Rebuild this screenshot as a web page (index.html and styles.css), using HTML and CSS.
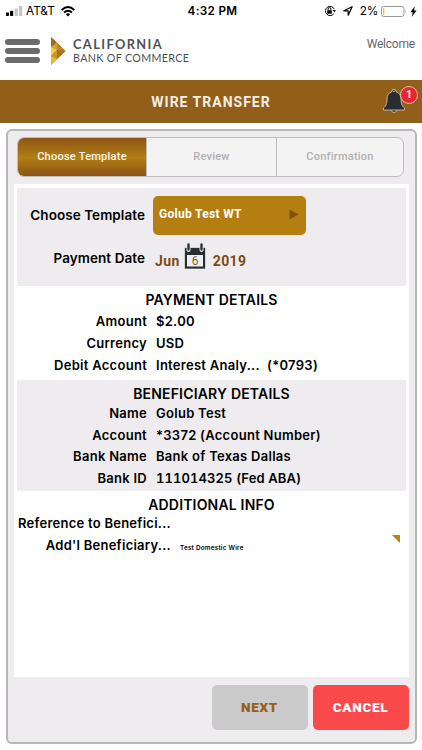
FILE: index.html
```html
<!DOCTYPE html>
<html lang="en">
<head>
<meta charset="utf-8">
<title>Wire Transfer</title>
<link rel="stylesheet" href="styles.css">
</head>
<body>
<div class="status">
  <div class="carrier">
    <svg width="17" height="10" viewBox="0 0 17 10"><rect x="0" y="6.5" width="3" height="3.5" rx=".7"/><rect x="4" y="4.8" width="3.2" height="5.2" rx=".7"/><rect x="8.6" y="2.5" width="3.2" height="7.5" rx=".7" fill="#c4c4c4"/><rect x="13" y="0" width="3.2" height="10" rx=".7" fill="#c4c4c4"/></svg>
    <span class="att">AT&amp;T</span>
    <svg class="wifi" width="14" height="11" viewBox="0 0 14 11"><g fill="none" stroke="#000" stroke-width="1.9"><path d="M.7 4Q7-2 13.3 4"/><path d="M3 6.5Q7 2.8 11 6.5"/></g><path d="M4.8 8.2Q7 6.4 9.2 8.2L7 10.6Z"/></svg>
  </div>
  <div class="time">4:32 PM</div>
  <div class="power">
    <svg width="12" height="12" viewBox="0 0 12 12"><path d="M9.7 8.8A4.6 4.6 0 1 1 10.2 4" fill="none" stroke="#000" stroke-width="1"/><path d="M8.7 5h3.2l-1.5 2.2z"/><rect x="3.2" y="5.2" width="4.6" height="3.6" rx=".5"/><path d="M4.1 5.3V4a1.4 1.4 0 0 1 2.8 0v1.3" fill="none" stroke="#000"/></svg>
    <svg class="loc" width="10" height="10" viewBox="0 0 10 10"><path d="M.8 4.8L9.2.8 5.2 9.2V4.8Z" fill="none" stroke="#000" stroke-width="1.2" stroke-linejoin="round"/></svg>
    <span class="pct">2%</span>
    <svg class="battery" width="26" height="11" viewBox="0 0 26 11"><rect x=".5" y=".5" width="22.5" height="10" rx="2.3" fill="#fff" stroke="#999"/><rect x="2" y="2" width="1.3" height="7" fill="#f5c332"/><path d="M24.3 3.8q1.4 1.6 0 3.4z" fill="#999"/></svg>
    <svg class="bolt" width="7" height="11" viewBox="0 0 7 11"><path d="M4.7.2L.4 6.2h2.4L1.7 10.8 6.6 4.5H4z"/></svg>
  </div>
</div>

<header class="header">
  <div class="menu"><i></i><i></i><i></i></div>
  <svg class="logo" width="15" height="28" viewBox="0 0 15 28"><path d="M0 0L14.5 14 0 28Z" fill="#b9831f"/><path d="M0 0L6 5.8 0 10Z" fill="#a06b20"/><path d="M0 10L6 5.8V13Z" fill="#d9a72e"/><path d="M0 10L6 13 0 19Z" fill="#f0cf43"/><path d="M6 13V22L0 19Z" fill="#c8962a"/><path d="M0 19L6 22 0 28Z" fill="#e4bb38"/><path d="M6 5.8L14.5 14 6 13Z" fill="#b98530"/><path d="M6 13L14.5 14 6 22Z" fill="#a96f23"/></svg>
  <div class="brand"><b>CALIFORNIA</b><span>BANK OF COMMERCE</span></div>
  <span class="welcome">Welcome</span>
</header>

<div class="titlebar">
  <h1>WIRE TRANSFER</h1>
  <div class="alerts">
    <svg width="24" height="26" viewBox="0 0 24 26"><path d="M12 1.2a2 2 0 0 0-2 2v.5C6.7 4.6 5 7.5 5 11c0 5-1.2 7.5-3.5 9v2h21v-2C20.2 18.500 19 16 19 11c0-3.500-1.700-6.400-5-7.300v-.5a2 2 0 0 0-2-2zM9.500 22a2.500 2.500 0 0 0 5 0" fill="#292d30" stroke="#d9cbb8" stroke-width=".8"/><circle cx="12" cy="3.200" r=".8" fill="#d9cbb8"/></svg>
    <span class="badge">1</span>
  </div>
</div>

<main class="panel">
  <nav class="tabs"><span class="active">Choose Template</span><span>Review</span><span>Confirmation</span></nav>
  <div class="sheet">
    <section class="picker">
      <div class="field template"><label>Choose Template</label><div class="select"><span>Golub Test WT</span><svg width="10" height="11" viewBox="0 0 10 11"><path d="M.5.5L9.500 5.500.5 10.500Z" fill="#85500c"/></svg></div></div>
      <div class="field payday"><label>Payment Date</label><div class="date"><span class="month">Jun</span>
        <svg width="24" height="28" viewBox="0 0 24 28"><path d="M1.500 5.500H22.500V27H1.500Z" fill="#292d30" stroke="#fff" stroke-opacity=".6"/><rect x="4" y="13" width="16" height="11.500" fill="#eaf1f5"/><g stroke="#e5e8e9" stroke-width="4" stroke-linecap="round"><path d="M5.500 3V8M18.500 3V8"/></g><g stroke="#292d30" stroke-width="2.300" stroke-linecap="round"><path d="M5.500 2.500V7.500M18.500 2.500V7.500"/></g><text x="12" y="23" text-anchor="middle" class="day">6</text></svg>
        <span class="year">2019</span></div></div>
    </section>
    <section class="details payment">
      <h2>PAYMENT DETAILS</h2>
      <dl><dt>Amount</dt><dd>$2.00</dd><dt>Currency</dt><dd>USD</dd><dt>Debit Account</dt><dd>Interest Analy...&nbsp; (*0793)</dd></dl>
    </section>
    <section class="details beneficiary">
      <h2>BENEFICIARY DETAILS</h2>
      <dl><dt>Name</dt><dd>Golub Test</dd><dt>Account</dt><dd>*3372 (Account Number)</dd><dt>Bank Name</dt><dd>Bank of Texas Dallas</dd><dt>Bank ID</dt><dd class="bank-id">111014325 (Fed ABA)</dd></dl>
    </section>
    <section class="details additional">
      <h2>ADDITIONAL INFO</h2>
      <dl><dt>Reference to Benefici...</dt><dd></dd><dt>Add'l Beneficiary...</dt><dd class="memo"><span>Test Domestic Wire</span><svg width="8" height="8" viewBox="0 0 8 8"><path d="M0 0H8V8Z" fill="#b98218"/></svg></dd></dl>
    </section>
  </div>
  <div class="actions"><button class="next">NEXT</button><button class="cancel">CANCEL</button></div>
</main>
</body>
</html>
```
FILE: styles.css
```css
* { box-sizing: border-box; }
body { margin: 0; width: 422px; height: 750px; overflow: hidden; background: #fff; color: #000; font-family: Inter, "Liberation Sans", sans-serif; }
svg { display: block; flex: none; }
.status { height: 22px; display: grid; grid-template-columns: 1fr auto 1fr; align-items: center; padding: 0 5px 0 6px; }
.carrier, .power { display: flex; align-items: center; }
.att { margin-left: 3px; font-size: 11.8px; width: 29px; white-space: nowrap; }
.wifi { margin-left: 6px; }
.time { font-size: 11.7px; font-weight: 600; letter-spacing: .35px; position: relative; left: 1px; }
.power { justify-content: flex-end; }
.loc { margin-left: 7px; }
.pct { margin-left: 7px; font-size: 11.8px; letter-spacing: -.3px; }
.battery { margin-left: 3px; }
.bolt { margin-left: 3px; }

.header { height: 58px; display: flex; align-items: flex-start; padding: 15px 7px 0 5px; }
.menu { width: 35px; margin-top: 2px; display: flex; flex-direction: column; gap: 2.500px; }
.menu i { height: 6.300px; border-radius: 3px; background: #6b6b6b; }
.logo { margin-left: 11px; }
.brand { margin: 0 0 0 7px; color: #4d5058; font-family: Lato, sans-serif; display: flex; flex-direction: column; white-space: nowrap; }
.brand b { font-size: 12.800px; line-height: 14px; letter-spacing: 1.400px; }
.brand span { font-size: 10.700px; line-height: 14px; letter-spacing: .35px; }
.welcome { margin-left: auto; color: #66666c; font: 400 12px/14px Roboto, sans-serif; letter-spacing: -.2px; }

.titlebar { height: 43px; background: #925f1b; display: grid; place-items: center; position: relative; }
.titlebar h1 { margin: 0; font: 700 14px/20px Roboto, sans-serif; letter-spacing: 1px; color: #f5eee3; }
.alerts { position: absolute; left: 382px; top: 8px; }
.badge { position: absolute; left: 18px; top: -2px; width: 18px; height: 18px; border: 1px solid #e8b9a8; border-radius: 50%; background: #e32632; color: #fff; font: 700 10px/16px Roboto, sans-serif; text-align: center; }

.panel { margin: 6px 5px 0 6px; height: 615px; border: 2px solid #b7b7b8; border-radius: 6px; background: #eeecee; padding: 6px 6px 0; }
.tabs { margin: 0 5px 0 3px; height: 40px; display: grid; grid-template-columns: 128px 130px 1fr; border: 1px solid #bdbdbd; border-radius: 7px; overflow: hidden; background: #f4f3f4; font: 500 11px/37px Roboto, sans-serif; letter-spacing: .25px; color: #b0b0b0; }
.tabs span { text-align: center; border-left: 1px solid #bdbdbd; }
.tabs .active { border-left: 0; color: #fff5e6; background: linear-gradient(#8c5515 0%, #b37e14 52%, #8c5317 100%); }
.sheet { margin-top: 7px; height: 493px; background: #fff; padding: 4px 3px 0; }
.picker { height: 98px; background: #eeecee; padding-top: 8px; }
.field { display: flex; align-items: center; }
.field label { width: 128px; text-align: right; font-size: 13.500px; font-weight: 600; letter-spacing: .06px; white-space: nowrap; }
.template { height: 38px; }
.select { margin-left: 8px; width: 153px; height: 39px; border-radius: 5px; background: #b47e13; display: flex; align-items: center; justify-content: space-between; padding: 0 7px 2px 6px; color: #fff; font: 700 12px Roboto, sans-serif; letter-spacing: .3px; }
.payday { height: 36px; margin-top: 6px; }
.date { display: flex; align-items: center; margin-left: 10px; color: #7d4a18; font: 700 14px Roboto, sans-serif; letter-spacing: .4px; }
.date svg { margin: -4px 6px 0 3px; }
.day { font: 400 12px Roboto, sans-serif; letter-spacing: 0; fill: #925f1b; }
.month, .year { padding-top: 5px; }

.details h2 { margin: 0; font-size: 14px; font-weight: 600; text-align: center; letter-spacing: .18px; line-height: 20px; }
.details dl { margin: 0; display: grid; grid-template-columns: 130px 1fr; column-gap: 9px; font-size: 13px; font-weight: 600; line-height: 22px; letter-spacing: .28px; white-space: nowrap; }
.details dt { text-align: right; }
.details dd { margin: 0; }
.payment { height: 94px; padding-top: 4px; }
.beneficiary { height: 111px; padding-top: 4px; background: #eeecee; }
.beneficiary dl { line-height: 21.500px; margin-top: -1px; }
.bank-id { font-variant-numeric: tabular-nums; letter-spacing: .1px; }
.additional { padding-top: 4px; }
.additional dl { grid-template-columns: 154px 1fr; grid-template-rows: 18px 24px; line-height: 18px; letter-spacing: .25px; margin-top: -1px; }
.additional dt:nth-of-type(2) { padding-top: 4px; }
.memo { display: flex; justify-content: space-between; padding: 7px 6px 0 0; font-size: 6.300px; line-height: 18px; }
.memo svg { margin-top: -4px; }

.actions { margin-top: 8px; display: flex; justify-content: flex-end; gap: 5px; padding-right: .5px; }
.actions button { width: 96px; height: 45px; border: 0; border-radius: 5px; padding: 0 0 2px; font: 900 13.500px Roboto, sans-serif; letter-spacing: .7px; }
.next { background: #cacaca; color: #93601c; }
.cancel { background: #fa494b; color: #fff; }
```
